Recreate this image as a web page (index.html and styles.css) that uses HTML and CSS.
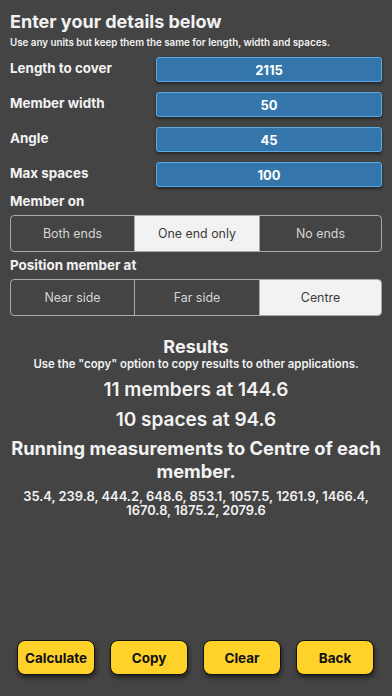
FILE: index.html
```html
<!DOCTYPE html>
<html lang="en">
<head>
<meta charset="utf-8">
<title>Spacing calculator</title>
<link rel="stylesheet" href="styles.css">
</head>
<body>
<div class="screen">
  <h1 class="title">Enter your details below</h1>
  <p class="hint">Use any units but keep them the same for length, width and spaces.</p>

  <div class="fields">
    <div class="field"><span class="label">Length to cover</span><div class="input">2115</div></div>
    <div class="field"><span class="label">Member width</span><div class="input">50</div></div>
    <div class="field"><span class="label">Angle</span><div class="input">45</div></div>
    <div class="field"><span class="label">Max spaces</span><div class="input">100</div></div>
  </div>

  <div class="group-label">Member on</div>
  <div class="segmented">
    <div class="seg">Both ends</div>
    <div class="seg active">One end only</div>
    <div class="seg">No ends</div>
  </div>

  <div class="group-label second">Position member at</div>
  <div class="segmented">
    <div class="seg">Near side</div>
    <div class="seg">Far side</div>
    <div class="seg active">Centre</div>
  </div>

  <div class="results">
    <h2 class="results-title">Results</h2>
    <p class="results-hint">Use the "copy" option to copy results to other applications.</p>
    <p class="result-line">11 members at 144.6</p>
    <p class="result-line">10 spaces at 94.6</p>
    <p class="result-line running">Running measurements to Centre of each member.</p>
    <p class="measures">35.4, 239.8, 444.2, 648.6, 853.1, 1057.5, 1261.9, 1466.4, 1670.8, 1875.2, 2079.6</p>
  </div>

  <div class="spacer"></div>

  <div class="actions">
    <button class="btn">Calculate</button>
    <button class="btn">Copy</button>
    <button class="btn">Clear</button>
    <button class="btn">Back</button>
  </div>
</div>
</body>
</html>
```

FILE: styles.css
```css
* { box-sizing: border-box; }
html, body { margin: 0; padding: 0; }
body {
  background: #444444;
  color: #f2f2f2;
  font-family: Inter, "Noto Sans", "Liberation Sans", sans-serif;
  width: 392px;
  height: 696px;
  overflow: hidden;
}
.screen {
  height: 696px;
  display: flex;
  flex-direction: column;
  padding: 10px 10px 0 10px;
}
.title {
  margin: 0;
  font-size: 18px;
  line-height: 24px;
  font-weight: 700;
}
.hint {
  margin: 2px 0 0 0;
  font-size: 9.8px;
  line-height: 14px;
  font-weight: 600;
}
.fields {
  margin-top: 7px;
  display: flex;
  flex-direction: column;
  gap: 10px;
}
.field {
  display: flex;
  align-items: center;
  height: 25px;
}
.label {
  width: 146px;
  font-size: 13.4px;
  font-weight: 700;
  margin-top: -4px;
}
.input {
  width: 226px;
  height: 25px;
  background: #3476ab;
  border: 1px solid #5aaae8;
  border-radius: 3px;
  box-shadow: 0 2px 3px rgba(0,0,0,0.45);
  display: flex;
  align-items: center;
  justify-content: center;
  font-size: 13px;
  font-weight: 700;
  color: #ffffff;
}
.group-label {
  margin-top: 5px;
  font-size: 13.4px;
  line-height: 19px;
  font-weight: 700;
}
.group-label.second { margin-top: 4px; }
.segmented {
  margin-top: 4px;
  display: grid;
  grid-template-columns: 123px 125px 1fr;
  height: 37px;
  border: 1px solid #a9a9a9;
  border-radius: 4px;
  overflow: hidden;
}
.seg {
  display: flex;
  align-items: center;
  justify-content: center;
  font-size: 12.4px;
  color: #d6d6d6;
  border-left: 1px solid #a9a9a9;
}
.seg:first-child { border-left: none; }
.seg.active {
  background: #f2f2f2;
  color: #3a3a3a;
}
.results {
  margin-top: 20px;
  text-align: center;
}
.results-title {
  margin: 0;
  font-size: 18px;
  line-height: 22px;
  font-weight: 700;
}
.results-hint {
  margin: 0;
  font-size: 11.4px;
  line-height: 13px;
  font-weight: 600;
}
.result-line {
  margin: 7px 0 0 0;
  font-size: 19px;
  line-height: 23px;
  font-weight: 600;
}
.result-line.running {
  margin-top: 6px;
  font-size: 18.3px;
  font-weight: 700;
}
.measures {
  margin: 7px 0 0 0;
  font-size: 12.9px;
  line-height: 14px;
  font-weight: 600;
}
.spacer { flex: 1; }
.actions {
  display: flex;
  gap: 15px;
  padding: 0 7px;
  margin-bottom: 21px;
}
.btn {
  width: 78px;
  height: 35px;
  background: #ffd22a;
  border: 1.5px solid #111111;
  border-radius: 8px;
  box-shadow: 1px 3px 4px rgba(0,0,0,0.5);
  font-family: Inter, "Noto Sans", "Liberation Sans", sans-serif;
  font-size: 13.5px;
  font-weight: 700;
  color: #111111;
  padding: 0;
}
```
